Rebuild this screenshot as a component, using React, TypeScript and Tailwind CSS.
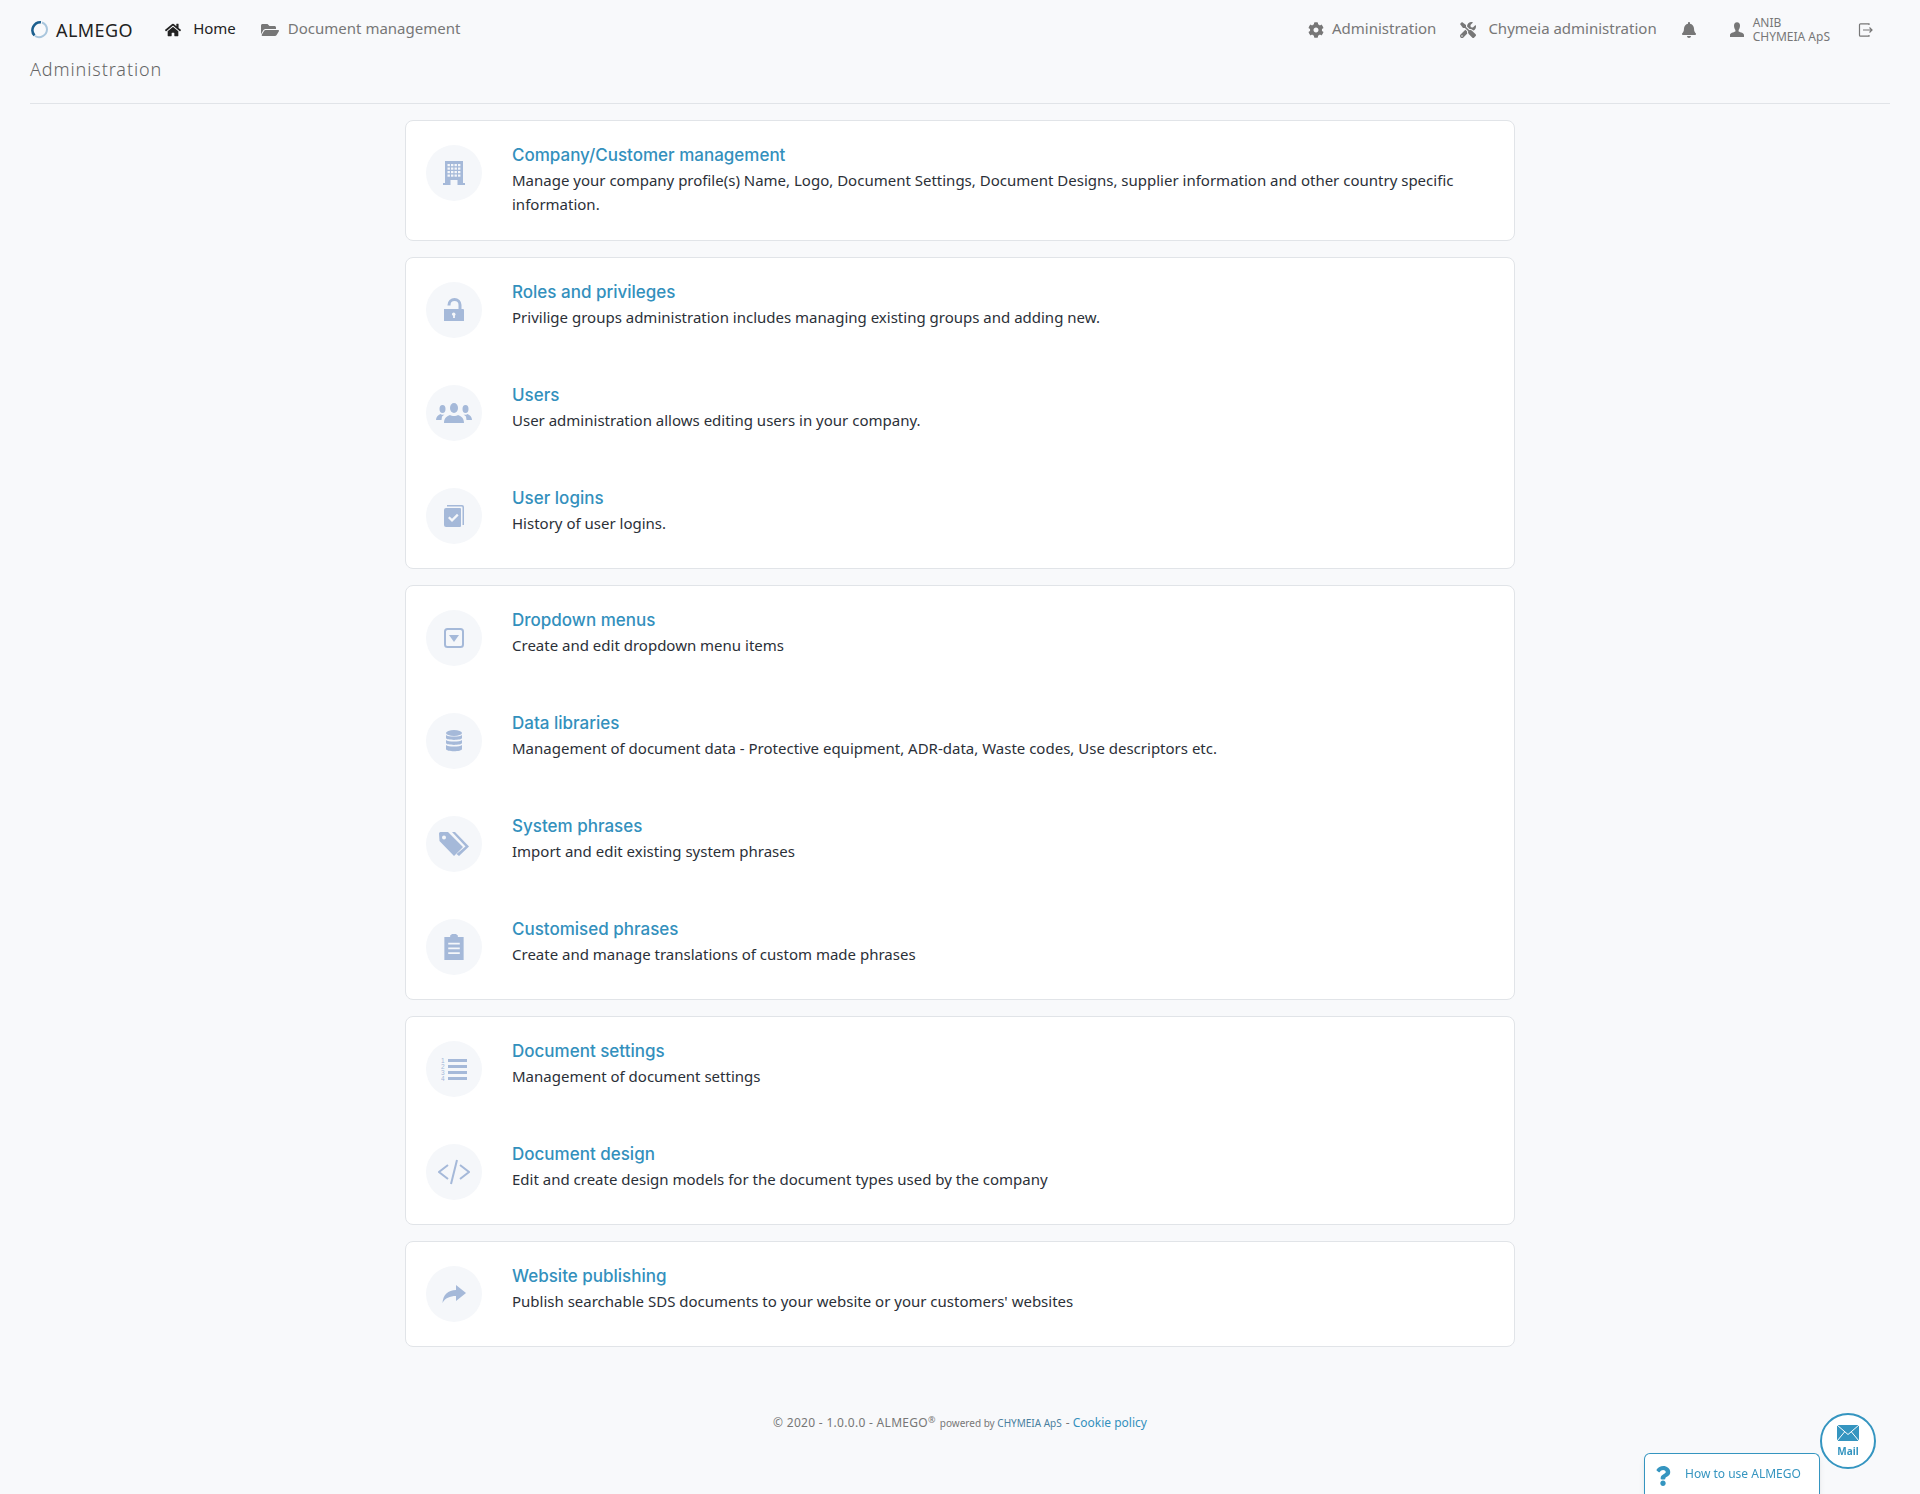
import type { ReactNode } from 'react'
import { FaBell, FaCog, FaFolderOpen, FaHome, FaQuestion, FaTools } from 'react-icons/fa'

// Icons for the admin rows, drawn on a 24 box to follow the glyph set of the original
const I = ({ children, className = 'h-6 w-6' }: { children: ReactNode; className?: string }) => (
  <svg viewBox="0 0 24 24" className={`${className} fill-[#a5b9d9]`}>
    {children}
  </svg>
)

const BuildingIcon = () => (
  <I>
    <path d="M3 0h18v22h2v2H1v-2h2zM8.500 24v-5h7v5z" fillRule="evenodd" />
    {[3, 6.500, 10, 13.500].map((y) =>
      [5.500, 9, 12.500, 16].map((x) => <rect key={`${x}-${y}`} x={x} y={y} width="2.400" height="2.200" className="fill-[#f5f7fa]" />),
    )}
  </I>
)

const LockIcon = () => (
  <I>
    <path
      d="M2 12h19a1 1 0 0 1 1 1v11H2zM10.500 16a1.600 1.600 0 0 0 .6 2.800V21h1.800v-2.200a1.600 1.600 0 1 0-2.400-2.800z"
      fillRule="evenodd"
      transform="translate(0 -1)"
    />
    <path d="M5 7a7 7 0 0 1 14 0v4h-3V7a4 4 0 0 0-8 0v.5H5z" transform="translate(.5 0)" />
  </I>
)

const UsersIcon = () => (
  <svg viewBox="0 0 36 20" className="h-5 w-9 fill-[#a5b9d9]">
    <ellipse cx="18" cy="5" rx="4" ry="5" />
    <path d="M8 20c0-5 3-7 6-8 2 1.400 6 1.400 8 0 3 1 6 3 6 8z" />
    <ellipse cx="6.500" cy="6" rx="3" ry="4" />
    <path d="M0 17c0-3 2-5 4.500-6 1.500 1 3 1 4 .5L6 13.500 5.500 17z" />
    <ellipse cx="29.500" cy="6" rx="3" ry="4" />
    <path d="M36 17c0-3-2-5-4.500-6-1.500 1-3 1-4 .5l2.500 2 .5 3.500z" />
  </svg>
)

const LoginsIcon = () => (
  <I>
    <path d="M2 6a2 2 0 0 1 2-2h14a1 1 0 0 1 1 1v17a1 1 0 0 1-1 1H4a2 2 0 0 1-2-2zM6 14l1.600-1.600 2.400 2.400 5-5L16.600 11.400 10 18z" fillRule="evenodd" />
    <path d="M5 1h15a2 2 0 0 1 2 2v18h-1.500V3.500a1 1 0 0 0-1-1H5z" />
  </I>
)

const DropdownIcon = () => (
  <svg viewBox="0 0 20 20" className="h-5 w-5">
    <rect x="1" y="1" width="18" height="18" rx="2.500" className="fill-none stroke-[#a5b9d9] stroke-2" />
    <path d="M5 7h10l-5 7z" className="fill-[#a5b9d9]" />
  </svg>
)

const DatabaseIcon = () => (
  <svg viewBox="0 0 16 22" className="h-5.5 w-4 fill-[#a5b9d9]">
    <ellipse cx="8" cy="3" rx="8" ry="3" />
    <path d="M0 5c2 2 14 2 16 0v3c0 2.500-16 2.500-16 0zM0 10c2 2 14 2 16 0v3c0 2.500-16 2.500-16 0zM0 15c2 2 14 2 16 0v4c0 3-16 3-16 0z" />
  </svg>
)

const TagsIcon = () => (
  <svg viewBox="0 0 30 24" className="h-6 w-7.5 fill-[#a5b9d9]">
    <path d="M0 1.500A1.500 1.500 0 0 1 1.500 0H9l15 15-9 9L.5 9zM5 3.500a2 2 0 1 0 0 4 2 2 0 0 0 0-4z" fillRule="evenodd" />
    <path d="M13 0h3l14 14.500L20 24l-2.500-2 9-7.500z" />
  </svg>
)

const ClipboardIcon = () => (
  <svg viewBox="0 0 20 27" className="h-6.5 w-5 fill-[#a5b9d9]">
    <path
      d="M0 3h6V1.500L8 0h4l2 1.500V3h6v24H0zM4 9v1.800h12V9zM4 14v1.800h12V14zM4 19v1.800h12V19z"
      fillRule="evenodd"
    />
  </svg>
)

const OrderedIcon = () => (
  <svg viewBox="0 0 26 24" className="h-6 w-6.5 fill-[#a5b9d9]">
    {[2, 8, 14, 20].map((y) => (
      <rect key={y} x="7" y={y} width="19" height="3" />
    ))}
    {['1', '2', '3', '4'].map((d, i) => (
      <text key={d} x="0" y={5.500 + i * 6} fontSize="6.500" fontFamily="Liberation Sans, sans-serif">
        {d}
      </text>
    ))}
  </svg>
)

const CodeIcon = () => (
  <svg viewBox="0 0 32 26" className="h-6.5 w-8 fill-none stroke-[#a5b9d9] stroke-2">
    <path d="M10 6l-9 7 9 7M22 6l9 7-9 7M19 1l-6 24" />
  </svg>
)

const ShareIcon = () => (
  <svg viewBox="0 0 24 20" className="h-5 w-6 fill-[#a5b9d9]">
    <path d="M14 1l10 8-10 8v-5C8 12 3 14 .5 19 1 11 6 6 14 6z" />
  </svg>
)

const UserGlyph = () => (
  <svg viewBox="0 0 16 16" className="h-4 w-4 fill-[#777]">
    <path d="M5 3.800a3 3.500 0 0 1 6 0c0 1.800-.8 3.500-1.400 4.200v1.600c2 .9 5.400 1.400 5.400 3.600V15H1v-1.800c0-2.200 3.400-2.700 5.400-3.600V8C5.800 7.300 5 5.600 5 3.800z" />
  </svg>
)

const LogoutGlyph = () => (
  <svg viewBox="0 0 16 16" className="h-4 w-4 fill-none stroke-[#777] stroke-[1.2]">
    <path d="M11 3V1.800H2.500a1 1 0 0 0-1 1v10.400a1 1 0 0 0 1 1H11V13M5 8h9M11.500 5.500L14 8l-2.500 2.500" />
  </svg>
)

const MailGlyph = () => (
  <svg viewBox="0 0 22 16" className="h-4 w-5.5">
    <path d="M0 0h22v16H0z" className="fill-[#3595c0]" />
    <path d="M0 0l11 9.500L22 0M0 16l7.500-9M22 16l-7.500-9" className="fill-none stroke-white stroke-1" />
  </svg>
)

const Logo = () => (
  <svg viewBox="0 0 20 20" className="h-5 w-5 fill-none">
    <path d="M11 2.200a8 8 0 0 0-6.500 13.300" className="stroke-[#1c5f8e] stroke-[2.5]" />
    <path d="M5 16a8 8 0 0 0 12-6.500 8 8 0 0 0-5-7" className="stroke-[#a9c6dd] stroke-2" />
  </svg>
)

type Item = { title: string; text: string; icon: ReactNode }

const GROUPS: Item[][] = [
  [
    {
      title: 'Company/Customer management',
      text: 'Manage your company profile(s) Name, Logo, Document Settings, Document Designs, supplier information and other country specific information.',
      icon: <BuildingIcon />,
    },
  ],
  [
    { title: 'Roles and privileges', text: 'Privilige groups administration includes managing existing groups and adding new.', icon: <LockIcon /> },
    { title: 'Users', text: 'User administration allows editing users in your company.', icon: <UsersIcon /> },
    { title: 'User logins', text: 'History of user logins.', icon: <LoginsIcon /> },
  ],
  [
    { title: 'Dropdown menus', text: 'Create and edit dropdown menu items', icon: <DropdownIcon /> },
    {
      title: 'Data libraries',
      text: 'Management of document data - Protective equipment, ADR-data, Waste codes, Use descriptors etc.',
      icon: <DatabaseIcon />,
    },
    { title: 'System phrases', text: 'Import and edit existing system phrases', icon: <TagsIcon /> },
    { title: 'Customised phrases', text: 'Create and manage translations of custom made phrases', icon: <ClipboardIcon /> },
  ],
  [
    { title: 'Document settings', text: 'Management of document settings', icon: <OrderedIcon /> },
    { title: 'Document design', text: 'Edit and create design models for the document types used by the company', icon: <CodeIcon /> },
  ],
  [
    {
      title: 'Website publishing',
      text: "Publish searchable SDS documents to your website or your customers' websites",
      icon: <ShareIcon />,
    },
  ],
]

function Row({ item }: { item: Item }) {
  return (
    <div className="flex items-start gap-7.5">
      <div className="flex h-14 w-14 shrink-0 items-center justify-center rounded-full bg-[#f5f7fa]">{item.icon}</div>
      <div className="min-w-0 flex-1">
        <h3 className="font-['Inter',sans-serif] text-[17px] leading-5 font-medium text-[#3390bd]">{item.title}</h3>
        <p className="mt-0.75 text-[15px] leading-6 text-[#2b3038]">{item.text}</p>
      </div>
    </div>
  )
}

export default function App() {
  return (
    <div className="relative min-h-screen bg-[#f8f9fb] font-['Noto_Sans',sans-serif] text-[15px]">
      <header className="mx-7.5 border-b border-[#e1e4e8] pt-3.5 pb-5">
        <nav className="flex h-8 items-center text-[#777]">
          <Logo />
          <span className="mr-8 ml-1.5 text-lg tracking-wide text-[#222]">ALMEGO</span>
          <FaHome className="h-4 w-4 text-[#222]" />
          <span className="mr-6 ml-3 -mt-1 text-[#222]">Home</span>
          <FaFolderOpen className="h-4 w-5" />
          <span className="ml-2 -mt-1">Document management</span>

          <FaCog className="ml-auto h-4 w-4" />
          <span className="ml-2 -mt-1">Administration</span>
          <FaTools className="ml-6 h-4 w-4" />
          <span className="ml-3 -mt-1">Chymeia administration</span>
          <FaBell className="ml-6 h-4 w-4" />
          <span className="ml-8">
            <UserGlyph />
          </span>
          <span className="ml-2 text-xs leading-3.5">
            ANIB
            <br />
            CHYMEIA ApS
          </span>
          <span className="mr-4 ml-7">
            <LogoutGlyph />
          </span>
        </nav>
        <h1 className="mt-2.25 text-lg leading-7 font-light tracking-wider text-[#666]">Administration</h1>
      </header>

      <main className="mx-auto flex w-[1110px] flex-col gap-4 pt-4">
        {GROUPS.map((group, i) => (
          <section key={i} className="flex flex-col gap-[47px] rounded-lg border border-[#e1e4e8] bg-white px-5 py-6">
            {group.map((item) => (
              <Row key={item.title} item={item} />
            ))}
          </section>
        ))}
      </main>

      <footer className="mt-17 flex items-baseline justify-center gap-1 pb-14 text-[#777]">
        <span className="text-xs tracking-wide">
          © 2020 - 1.0.0.0 - ALMEGO<sup>®</sup>
        </span>
        <span className="text-[10px]">
          powered by <span className="text-[#4a7f9f]">CHYMEIA ApS</span>
        </span>
        <span className="text-xs">
          - <span className="text-[#3390bd]">Cookie policy</span>
        </span>
      </footer>

      <div className="fixed right-11 bottom-0 flex items-start">
        <div className="mt-10 flex h-10.25 w-44 items-start gap-3.5 rounded-t-md border border-b-0 border-[#3595c0] bg-white px-2.5 pt-3 shadow-md">
          <FaQuestion className="h-5 w-4 text-[#3595c0]" />
          <span className="text-xs text-[#3595c0]">How to use ALMEGO</span>
        </div>
        <div className="flex h-14 w-14 flex-col items-center justify-center gap-1 rounded-full border-2 border-[#3595c0] bg-white text-[#3595c0]">
          <MailGlyph />
          <span className="text-[10px] leading-3 font-bold">Mail</span>
        </div>
      </div>
    </div>
  )
}
